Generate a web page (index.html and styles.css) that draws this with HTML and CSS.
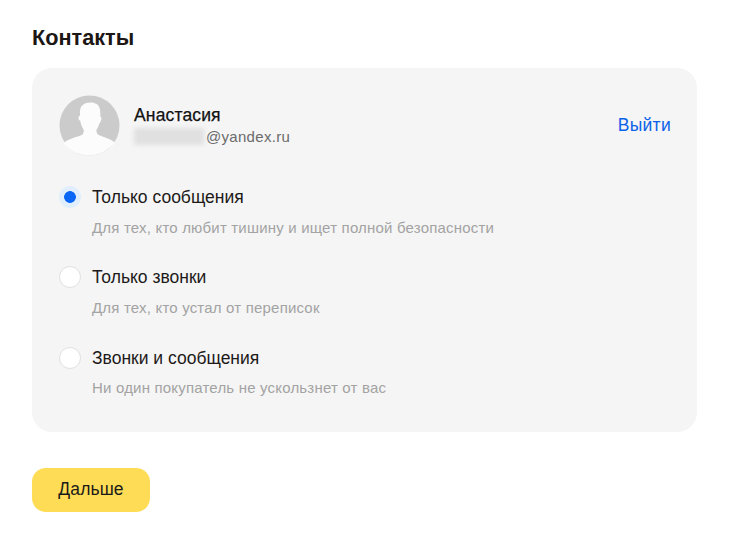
FILE: index.html
```
<!DOCTYPE html>
<html lang="ru">
<head>
<meta charset="utf-8">
<title>Контакты</title>
<link rel="stylesheet" href="styles.css">
</head>
<body>
<main class="page">
  <h1 class="title">Контакты</h1>
  <section class="card">
    <div class="user">
      <svg class="avatar" viewBox="0 0 62 62" aria-hidden="true">
        <circle cx="31" cy="31" r="30.5" fill="#cbcbcb"/>
        <path fill="#fcfcfc" d="M4.500 49c4-4 13-6 18-8 2-1 3-3 2.500-6-2-3-3-6-3.500-9-1.500 0-2-2-1.500-4 .5-1 1-1 1.500-1-.5-5 0-9 3-11 3-3 10-3 13-1 3 1 5 5 4.500 13 1 0 1.500 1 1 3-.5 2-1 3-2 4-.5 2-1.500 4-3 6.500 0 3 1 4.500 3 5.500 5 2 12 4 16 7.500C50 56 41 61.500 31 61.500S11 56 4.500 49z"/>
      </svg>
      <div class="user-info">
        <div class="user-name">Анастасия</div>
        <div class="user-mail"><span class="blur"></span>@yandex.ru</div>
      </div>
      <a class="logout" href="#">Выйти</a>
    </div>
    <div class="options">
      <div class="option">
        <div class="option-row"><span class="radio radio-on"></span><span class="option-label">Только сообщения</span></div>
        <div class="option-hint">Для тех, кто любит тишину и ищет полной безопасности</div>
      </div>
      <div class="option">
        <div class="option-row"><span class="radio"></span><span class="option-label">Только звонки</span></div>
        <div class="option-hint">Для тех, кто устал от переписок</div>
      </div>
      <div class="option">
        <div class="option-row"><span class="radio"></span><span class="option-label">Звонки и сообщения</span></div>
        <div class="option-hint">Ни один покупатель не ускользнет от вас</div>
      </div>
    </div>
  </section>
  <button class="next" type="button">Дальше</button>
</main>
</body>
</html>
```
FILE: styles.css
```
* { box-sizing: border-box; }
html, body { margin: 0; background: #fff; }
body { font-family: "Liberation Sans", Arial, sans-serif; color: #1a1a1a; }
.page { width: 729px; height: 533px; padding: 25px 32px 0 32px; overflow: hidden; }
.title { margin: 0 0 17px; font-size: 21.700px; line-height: 26px; font-weight: 700; color: #1c1614; }
.card { height: 364px; padding: 27px 26px 0 27px; background: #f5f5f5; border-radius: 20px; }
.user { display: flex; align-items: center; height: 61px; }
.avatar { display: block; width: 61px; height: 61px; flex: none; }
.user-info { margin-left: 14px; flex: 1; }
.user-name { padding-bottom: 2px; font-size: 17.500px; line-height: 18px; letter-spacing: 0.15px; color: #111; -webkit-text-stroke: 0.25px #111; }
.user-mail { display: flex; align-items: center; margin-top: 2px; font-size: 15px; line-height: 18px; letter-spacing: 0.3px; color: #6b6b6b; }
.blur { display: block; width: 70px; height: 17px; margin-right: 2px; background: #e0e0e0; border-radius: 2px; filter: blur(2px); }
.logout { padding-bottom: 2px; font-size: 17.500px; line-height: 18px; letter-spacing: 0.3px; color: #0a62e8; text-decoration: none; }
.options { margin-top: 30px; }
.option { height: 80.400px; }
.option-row { display: flex; align-items: center; height: 22px; }
.radio { width: 22px; height: 22px; flex: none; background: #fff; border: 1px solid #e0e0e0; border-radius: 50%; }
.radio-on { background: radial-gradient(circle closest-side, #0a66f5 0 5.500px, #e0eefd 6.200px); border: 0; }
.option-label { margin-left: 11px; font-size: 17.500px; line-height: 22px; color: #1d1a19; }
.option-hint { margin: 10.500px 0 0 33px; font-size: 15px; line-height: 18px; letter-spacing: 0.19px; color: #a3a3a3; }
.next { display: block; width: 118px; height: 44px; margin-top: 36px; padding: 0 0 2px; background: #ffdc55; border: 0; border-radius: 14px; font: 17.500px/22px "Liberation Sans", Arial, sans-serif; letter-spacing: 0.1px; color: #1a1a1a; }
```
